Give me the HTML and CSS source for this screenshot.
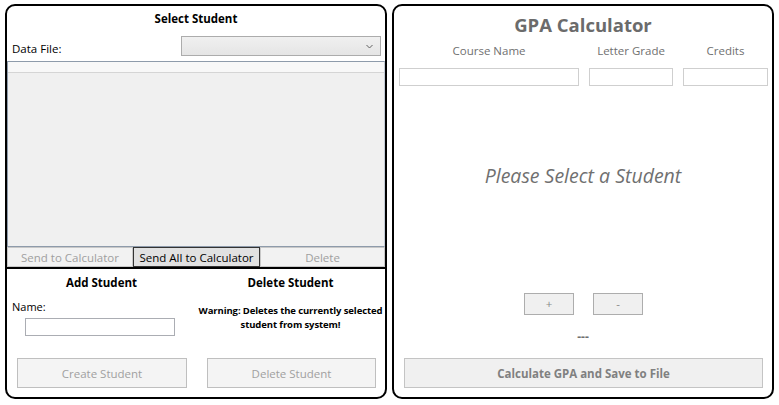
FILE: index.html
```html
<!DOCTYPE html>
<html>
<head>
<meta charset="utf-8">
<title>GPA Calculator</title>
<link rel="stylesheet" href="styles.css">
</head>
<body>
<div class="app">
  <section class="panel students">
    <div class="select">
      <h2 class="title">Select Student</h2>
      <div class="file-row">
        <span class="label">Data File:</span>
        <div class="combo">
          <svg class="chev" width="7" height="5" viewBox="0 0 7 5"><path d="M0.5 1 L3.5 4 L6.5 1" fill="none" stroke="#606060" stroke-width="1"/></svg>
        </div>
      </div>
      <div class="list"><div class="list-head"></div></div>
      <div class="list-actions">
        <button class="btn flat disabled">Send to Calculator</button>
        <button class="btn flat active">Send All to Calculator</button>
        <button class="btn flat disabled">Delete</button>
      </div>
    </div>
    <div class="manage">
      <div class="col add">
        <h3 class="sub">Add Student</h3>
        <span class="name-label">Name:</span>
        <div class="textbox name-box"></div>
        <button class="btn big disabled">Create Student</button>
      </div>
      <div class="col del">
        <h3 class="sub">Delete Student</h3>
        <p class="warning">Warning: Deletes the currently selected<br>student from system!</p>
        <button class="btn big disabled">Delete Student</button>
      </div>
    </div>
  </section>
  <section class="panel calc">
    <h1 class="calc-title">GPA Calculator</h1>
    <div class="grid labels">
      <span>Course Name</span>
      <span>Letter Grade</span>
      <span>Credits</span>
    </div>
    <div class="grid inputs">
      <div class="textbox light"></div>
      <div class="textbox light"></div>
      <div class="textbox light"></div>
    </div>
    <p class="message">Please Select a Student</p>
    <div class="pm">
      <button class="btn small disabled">+</button>
      <button class="btn small disabled">-</button>
    </div>
    <div class="result">---</div>
    <button class="btn big wide disabled">Calculate GPA and Save to File</button>
  </section>
</div>
</body>
</html>
```
FILE: styles.css
```css
* { box-sizing: border-box; }
html, body { margin: 0; padding: 0; background: #ffffff; }
body {
  font-family: "Open Sans", "Noto Sans", sans-serif;
  font-size: 11.5px;
  color: #000;
  width: 779px;
  height: 405px;
  overflow: hidden;
}
.app {
  display: flex;
  gap: 5px;
  padding: 4px 5px 0 5px;
}
.panel {
  width: 382px;
  height: 395px;
  border: 2px solid #000;
  border-radius: 10px;
  overflow: hidden;
  display: flex;
  flex-direction: column;
}
.btn {
  font-family: inherit;
  font-size: 11.5px;
  margin: 0;
  padding: 0;
  background: #f0f0f0;
  border: 1px solid #adadad;
  color: #a0a0a0;
  display: flex;
  align-items: center;
  justify-content: center;
  line-height: 14px;
}
.btn.disabled { color: #a0a0a0; border-color: #bfbfbf; background: #f4f4f4; }

/* left panel */
.select { display: flex; flex-direction: column; }
.title {
  margin: 0;
  padding-top: 5px;
  font-size: 11.5px;
  font-weight: 700;
  line-height: 16px;
  text-align: center;
}
.file-row {
  display: flex;
  justify-content: space-between;
  margin-top: 9px;
  height: 20px;
  padding: 0 4px 0 5px;
}
.label {
  align-self: flex-end;
  line-height: 16px;
  margin-bottom: -1px;
  font-size: 11.5px;
}
.combo {
  width: 200px;
  height: 20px;
  border: 1px solid #acacac;
  background: linear-gradient(#f0f0f0, #e5e5e5);
  display: flex;
  align-items: center;
  justify-content: flex-end;
  padding-right: 7px;
}
.list {
  margin-top: 5px;
  height: 186px;
  border: 1px solid #8e9bab;
  border-right-color: #c4ccd6;
  background: #f0f0f0;
}
.list-head {
  height: 11px;
  background: #f8f8f8;
  border-bottom: 1px solid #d5d5d5;
}
.list-actions {
  display: grid;
  grid-template-columns: 126px 127px 125px;
  height: 20px;
}
.btn.flat { height: 20px; padding-top: 1px; }
.btn.flat.disabled { background: #f2f2f2; border-color: #c8c8c8; }
.btn.active { color: #000; background: #e1e1e1; border-color: #333; }

.manage {
  flex: 1;
  border-top: 2px solid #000;
  display: grid;
  grid-template-columns: 189px 189px;
  padding-bottom: 9px;
}
.col { display: flex; flex-direction: column; }
.sub {
  margin: 0;
  padding-top: 6px;
  font-size: 11.5px;
  font-weight: 700;
  line-height: 16px;
  text-align: center;
}
.name-label {
  margin: 8px 0 0 5px;
  line-height: 16px;
  font-size: 11px;
}
.textbox {
  height: 18px;
  border: 1px solid #abadb3;
  background: #fff;
}
.name-box { width: 150px; margin: 3px 0 0 18px; }
.btn.big { height: 30px; margin-top: auto; font-size: 11.5px; padding-top: 2px; }
.add .btn.big { width: 170px; margin-left: 10px; }
.del .btn.big { width: 169px; margin-left: 11px; }
.warning {
  margin: 13px 0 0 0;
  font-size: 9.5px;
  font-weight: 700;
  line-height: 14px;
  text-align: center;
  white-space: nowrap;
  letter-spacing: -0.1px;
}

/* right panel */
.calc { color: #6e6e6e; padding-bottom: 9px; }
.calc-title {
  margin: 0;
  padding-top: 7px;
  font-size: 18.5px;
  font-weight: 700;
  line-height: 24px;
  text-align: center;
  color: #6b6b6b;
}
.grid {
  display: grid;
  grid-template-columns: 180px 84px 85px;
  column-gap: 10px;
  padding-left: 5px;
}
.labels { margin-top: 6px; line-height: 16px; text-align: center; font-size: 11.5px; color: #707070; }
.inputs { margin-top: 9px; }
.textbox.light { border-color: #cfcfcf; }
.message {
  margin: 76px 0 0 0;
  font-size: 19.5px;
  font-style: italic;
  line-height: 28px;
  text-align: center;
  color: #707070;
}
.pm {
  display: flex;
  justify-content: center;
  gap: 19px;
  margin-top: 103px;
  padding-left: 1px;
}
.btn.small { width: 50px; height: 22px; border-color: #adadad; background: #f0f0f0; color: #8a8a8a; }
.result {
  margin-top: 15px;
  line-height: 14px;
  text-align: center;
  font-weight: 700;
  font-size: 12px;
  color: #707070;
}
.btn.wide {
  width: 359px;
  margin-left: 10px;
  margin-top: auto;
  font-weight: 700;
  color: #808080;
  border-color: #c4c4c4;
  background: #f0f0f0;
}
```
